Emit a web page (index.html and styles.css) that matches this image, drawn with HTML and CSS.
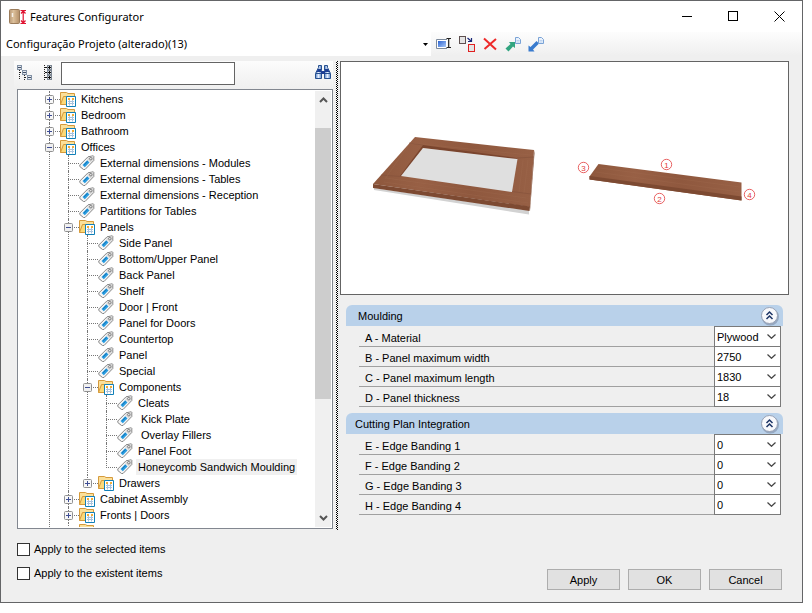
FILE: index.html
```html
<!DOCTYPE html>
<html lang="en">
<head>
<meta charset="utf-8">
<title>Features Configurator</title>
<link rel="stylesheet" href="styles.css">
</head>
<body>
<svg class="defs" aria-hidden="true">
  <defs>
    <linearGradient id="tan" x1="0" x2="1"><stop offset="0" stop-color="#b99a78"/><stop offset=".4" stop-color="#dcc09b"/><stop offset="1" stop-color="#b48f68"/></linearGradient>
    <linearGradient id="blue" x1="0" x2="1" y2="1"><stop offset="0" stop-color="#2a62d0"/><stop offset="1" stop-color="#a8c8f8"/></linearGradient>
    <linearGradient id="wood" x1="0" x2="1"><stop offset="0" stop-color="#8e583d"/><stop offset=".3" stop-color="#986045"/><stop offset=".6" stop-color="#8f583e"/><stop offset="1" stop-color="#976045"/></linearGradient>
    <linearGradient id="lens" x1="0" x2="1"><stop offset="0" stop-color="#5a86c8"/><stop offset=".5" stop-color="#e6f0ff"/><stop offset="1" stop-color="#5a86c8"/></linearGradient>
  </defs>
  <symbol id="folder" viewBox="0 0 16 16">
    <path d="M.5 13.500V1.500H6.500L8 2.500H14.500V6" fill="#fbe09a" stroke="#d59a3c"/>
    <path d="M.5 13.500L3.500 5.500H15V13.500Z" fill="#fcd978" stroke="#d59a3c"/>
    <path d="M6.500 5.500H15.500V15.500H6.500Z" fill="#fff" stroke="#1180b8"/>
    <path d="M8 10.500H14M8 12.500H14M9.500 9V14.500M12.500 9V14.500" stroke="#a9c3dd" fill="none"/>
    <path d="M8 8H10M12 8H14" stroke="#f2ad36" stroke-width="2"/>
  </symbol>
  <symbol id="tag" viewBox="0 0 16 16">
    <path d="M.8 10L9 1.800L14.300 .8L14.800 1.300V5.500L6 14.500H4.500L.8 11.500Z" fill="#f6f6f6" stroke="#858585"/>
    <path d="M9.500 2.500L14 1.200V5.200L11.500 7.500L8 4Z" fill="#d9d9d9"/>
    <path d="M3.500 10L8.200 5.200L10.500 7.500L5.800 12.200Z" fill="#269be0"/>
    <path d="M5 9.800L8.600 6.300" stroke="#1775b3"/>
    <circle cx="11.800" cy="3.700" r="1.200" fill="#fff" stroke="#777"/>
  </symbol>
  <symbol id="plus" viewBox="0 0 9 9">
    <rect x=".5" y=".5" width="8" height="8" rx="1" fill="#f7f7f7" stroke="#919191"/><path d="M2 4.500H7M4.500 2V7" stroke="#3e4d94"/>
  </symbol>
  <symbol id="minus" viewBox="0 0 9 9">
    <rect x=".5" y=".5" width="8" height="8" rx="1" fill="#f0f0f0" stroke="#919191"/><path d="M2 4.500H7" stroke="#3e4d94"/>
  </symbol>
  <symbol id="chev" viewBox="0 0 9 5"><path d="M.5 .5L4.500 4.300L8.500 .5" fill="none" stroke="#444" stroke-width="1.200"/></symbol>
  <symbol id="collapse" viewBox="0 0 20 20">
    <circle cx="10.300" cy="10.800" r="8.700" fill="#7886a0" opacity=".55"/>
    <circle cx="9.500" cy="9.500" r="8" fill="#f8f9fc" stroke="#98a2b5"/>
    <path d="M6.500 9L9.500 6L12.500 9M6.500 13L9.500 10L12.500 13" fill="none" stroke="#1d3566" stroke-width="1.500"/>
  </symbol>
  <symbol id="page" viewBox="0 0 6 7"><path d="M.5 .5H3.500L5.500 2.500V6.500H.5Z" fill="#eaf2fc" stroke="#7aa3d6"/><path d="M1.500 3.500H4.500M1.500 5H4.500" stroke="#9cbde6" stroke-width=".6"/></symbol>
</svg>

<div class="window">
  <header class="titlebar">
    <svg class="app-icon" viewBox="0 0 18 16"><rect x=".5" y=".5" width="10" height="14" rx="1" fill="url(#tan)" stroke="#9b7c5b"/><path d="M3.500 4V8" stroke="#f6f1ea" stroke-width="1.500"/><path d="M11.500 1.500H17M11.500 14.500H17M14.200 2V14M12 4.500L14.200 2L16.500 4.500M12 11.500L14.200 14L16.500 11.500" stroke="#e01230" stroke-width="1.200" fill="none"/></svg>
    <h1>Features Configurator</h1>
    <div class="caption-buttons">
      <button type="button" aria-label="Minimize"><svg viewBox="0 0 11 11"><path d="M0 5.500H10" stroke="#000"/></svg></button>
      <button type="button" aria-label="Maximize"><svg viewBox="0 0 11 11"><rect x=".5" y=".5" width="9" height="9" fill="none" stroke="#000"/></svg></button>
      <button type="button" aria-label="Close"><svg viewBox="0 0 11 11"><path d="M.5 .5L10.500 10.500M10.500 .5L.5 10.500" stroke="#000"/></svg></button>
    </div>
  </header>

  <div class="toolbar">
    <div class="project">
      <select aria-label="Project"><option>Configuração Projeto (alterado)(13)</option></select>
      <svg viewBox="0 0 5 3"><path d="M0 0H5L2.500 3Z"/></svg>
    </div>
    <div class="tools">
      <button type="button" aria-label="Rename"><svg viewBox="0 0 16 16"><path d="M11 3.500H.5V12.500H11" fill="#fff" stroke="#7c8a9c"/><path d="M2 5H10V11H2Z" fill="url(#blue)"/><path d="M10.500 2.500H15M10.500 11.500H15M12.700 3V11" stroke="#222" stroke-width="1.200"/></svg></button>
      <button type="button" aria-label="Duplicate"><svg viewBox="0 0 16 16"><rect x=".5" y=".5" width="6" height="7" fill="#e4e4e4" stroke="#5e5050"/><rect x="9.500" y="8.500" width="6" height="7" fill="#e4e4e4" stroke="#e02020"/><path d="M8.500 2L12 5M12.500 2V5.500H9" fill="none" stroke="#1a2878" stroke-width="1.200"/></svg></button>
      <button type="button" aria-label="Delete"><svg viewBox="0 0 16 16"><path d="M2 2.500L14 13.500M14 3L2.500 13" stroke="#ee2a2a" stroke-width="2"/></svg></button>
      <button type="button" aria-label="Export"><svg viewBox="0 0 16 16"><path d="M.5 12.500L5.500 8L4 6H10V12L8 10.500L3.500 15.500Z" fill="#32a580"/><use href="#page" x="10" y="1" width="6" height="7"/></svg></button>
      <button type="button" aria-label="Import"><svg viewBox="0 0 16 16"><path d="M.5 15.500V9.500L2.500 11L8.500 5L11 7.500L5 13.500L6.500 15.500Z" fill="#397bce"/><use href="#page" x="10" y="1" width="6" height="7"/></svg></button>
    </div>
  </div>

  <main class="content">
    <section class="browser">
      <div class="searchbar">
        <button type="button" aria-label="Collapse tree"><svg viewBox="0 0 16 16"><path d="M2.500 5V15M7.500 10V15M3 7.500H6M8 12.500H11" stroke="#222" stroke-dasharray="1 1" fill="none"/><g fill="#e4e9ef" stroke="#8291a5"><rect x=".5" y=".5" width="4" height="4"/><rect x="5.500" y="5.500" width="4" height="4"/><rect x="10.500" y="10.500" width="4" height="4"/></g><path d="M1 2.500H4M6 7.500H9M11 12.500H14" stroke="#435066"/></svg></button>
        <button type="button" aria-label="Expand tree"><svg viewBox="0 0 16 16"><path d="M4.500 0V15" stroke="#222" stroke-dasharray="1 1"/><g fill="#d5d9de" stroke="#7d8793"><rect x="7.500" y=".5" width="4" height="4"/><rect x="7.500" y="5.500" width="4" height="4"/><rect x="7.500" y="10.500" width="4" height="4"/></g><path d="M8 2.500H11M9.500 1V4M8 7.500H11M9.500 6V9M8 12.500H11M9.500 11V14M5 2.500H7M5 7.500H7M5 12.500H7" stroke="#111"/></svg></button>
        <input type="text" aria-label="Search">
        <button type="button" class="find" aria-label="Find"><svg viewBox="0 0 16 14"><g fill="url(#lens)" stroke="#27508f"><path d="M3.500 2.500V.5H6.500V5.500L6.500 13.500H.5V8.500Z"/><path d="M12.500 2.500V.5H9.500V5.500L9.500 13.500H15.500V8.500Z"/></g><path d="M6 6H10V9H6ZM1.500 7L3 4H6V7ZM14.500 7L13 4H10V7Z" fill="#1d3f94"/><path d="M1 8.500H6M10 8.500H15" stroke="#27508f"/></svg></button>
      </div>

      <div class="tree">
        <ul class="root">
          <li><div class="row"><button type="button" aria-label="Expand"><svg><use href="#plus"/></svg></button><svg class="ico"><use href="#folder"/></svg><span>Kitchens</span></div></li>
          <li><div class="row"><button type="button" aria-label="Expand"><svg><use href="#plus"/></svg></button><svg class="ico"><use href="#folder"/></svg><span>Bedroom</span></div></li>
          <li><div class="row"><button type="button" aria-label="Expand"><svg><use href="#plus"/></svg></button><svg class="ico"><use href="#folder"/></svg><span>Bathroom</span></div></li>
          <li><div class="row"><button type="button" aria-label="Collapse"><svg><use href="#minus"/></svg></button><svg class="ico"><use href="#folder"/></svg><span>Offices</span></div>
            <ul>
              <li><div class="row leaf"><svg class="ico"><use href="#tag"/></svg><span>External dimensions - Modules</span></div></li>
              <li><div class="row leaf"><svg class="ico"><use href="#tag"/></svg><span>External dimensions - Tables</span></div></li>
              <li><div class="row leaf"><svg class="ico"><use href="#tag"/></svg><span>External dimensions - Reception</span></div></li>
              <li><div class="row leaf"><svg class="ico"><use href="#tag"/></svg><span>Partitions for Tables</span></div></li>
              <li><div class="row"><button type="button" aria-label="Collapse"><svg><use href="#minus"/></svg></button><svg class="ico"><use href="#folder"/></svg><span>Panels</span></div>
                <ul>
                  <li><div class="row leaf"><svg class="ico"><use href="#tag"/></svg><span>Side Panel</span></div></li>
                  <li><div class="row leaf"><svg class="ico"><use href="#tag"/></svg><span>Bottom/Upper Panel</span></div></li>
                  <li><div class="row leaf"><svg class="ico"><use href="#tag"/></svg><span>Back Panel</span></div></li>
                  <li><div class="row leaf"><svg class="ico"><use href="#tag"/></svg><span>Shelf</span></div></li>
                  <li><div class="row leaf"><svg class="ico"><use href="#tag"/></svg><span>Door | Front</span></div></li>
                  <li><div class="row leaf"><svg class="ico"><use href="#tag"/></svg><span>Panel for Doors</span></div></li>
                  <li><div class="row leaf"><svg class="ico"><use href="#tag"/></svg><span>Countertop</span></div></li>
                  <li><div class="row leaf"><svg class="ico"><use href="#tag"/></svg><span>Panel</span></div></li>
                  <li><div class="row leaf"><svg class="ico"><use href="#tag"/></svg><span>Special</span></div></li>
                  <li><div class="row"><button type="button" aria-label="Collapse"><svg><use href="#minus"/></svg></button><svg class="ico"><use href="#folder"/></svg><span>Components</span></div>
                    <ul>
                      <li><div class="row leaf"><svg class="ico"><use href="#tag"/></svg><span>Cleats</span></div></li>
                      <li><div class="row leaf"><svg class="ico"><use href="#tag"/></svg><span>&nbsp;Kick Plate</span></div></li>
                      <li><div class="row leaf"><svg class="ico"><use href="#tag"/></svg><span>&nbsp;Overlay Fillers</span></div></li>
                      <li><div class="row leaf"><svg class="ico"><use href="#tag"/></svg><span>Panel Foot</span></div></li>
                      <li><div class="row leaf selected"><svg class="ico"><use href="#tag"/></svg><span>Honeycomb Sandwich Moulding</span></div></li>
                    </ul>
                  </li>
                  <li><div class="row"><button type="button" aria-label="Expand"><svg><use href="#plus"/></svg></button><svg class="ico"><use href="#folder"/></svg><span>Drawers</span></div></li>
                </ul>
              </li>
              <li><div class="row"><button type="button" aria-label="Expand"><svg><use href="#plus"/></svg></button><svg class="ico"><use href="#folder"/></svg><span>Cabinet Assembly</span></div></li>
              <li><div class="row"><button type="button" aria-label="Expand"><svg><use href="#plus"/></svg></button><svg class="ico"><use href="#folder"/></svg><span>Fronts | Doors</span></div></li>
              <li><div class="row"><button type="button" aria-label="Expand"><svg><use href="#plus"/></svg></button><svg class="ico"><use href="#folder"/></svg><span>F</span></div></li>
            </ul>
          </li>
        </ul>
        <div class="scrollbar">
          <svg viewBox="0 0 9 6"><path d="M1 5L4.500 1.500L8 5" fill="none" stroke="#555" stroke-width="2"/></svg>
          <div class="track"><div class="thumb"></div></div>
          <svg viewBox="0 0 9 6"><path d="M1 1L4.500 4.500L8 1" fill="none" stroke="#555" stroke-width="2"/></svg>
        </div>
      </div>
    </section>

    <div class="splitter"></div>

    <section class="details">
      <div class="preview">
        <svg viewBox="341 62 447 232" role="img" aria-label="Panel preview">
          <path d="M374 188L529 210.500V214.500L374 190Z" fill="#d2d2d2"/>
          <path d="M415 137L534 150L530 207L373 184Z" fill="url(#wood)"/>
          <path d="M373 184L530 206.500L529.500 211L373 188Z" fill="#7d4a32"/>
          <path d="M534 150L530 207V211L534.500 153Z" fill="#7d4a32"/>
          <path d="M423 145L517 158V160L423 148L402 176L400 176Z" fill="#7a452e"/>
          <path d="M423 148L517.500 159L512 192L401 176Z" fill="#dfdfdf"/>
          <path d="M381 175L401 176.500M512 191.500L531 194M423 145L409 143M517 158L534 157" stroke="#83503a" stroke-width=".6" fill="none"/>
          <path d="M410 143L530 155M408 146L385 179M386 178L526 198M384 182L528 203M523 160L519 192M528 160L524 193" stroke="#a56f53" stroke-width=".5" fill="none" opacity=".5"/>
          <path d="M598.500 164L741.500 182.500V200.500L589.500 179.500V176.500Z" fill="url(#wood)"/>
          <path d="M589.500 176L741.500 196.500V200.500L589.500 179.500Z" fill="#7d4a32"/>
          <path d="M600 168L740 187M596 172L740 192" stroke="#a56f53" stroke-width=".5" opacity=".5"/>
          <g fill="#fff" stroke="#e23c3c" stroke-width=".8"><circle cx="666.500" cy="164.500" r="5.200"/><circle cx="659.500" cy="198.500" r="5.200"/><circle cx="583.500" cy="167.500" r="5.200"/><circle cx="749.500" cy="194.500" r="5.200"/></g>
          <g class="marks"><text x="666.500" y="167.500">1</text><text x="659.500" y="201.500">2</text><text x="583.500" y="170.500">3</text><text x="749.500" y="197.500">4</text></g>
        </svg>
      </div>

      <div class="group">
        <div class="group-head"><h2>&nbsp;Moulding</h2><button type="button" aria-label="Collapse Moulding"><svg><use href="#collapse"/></svg></button></div>
        <div class="fields">
          <div class="field"><label for="a">A - Material</label><div class="combo"><select id="a"><option>Plywood</option></select><svg><use href="#chev"/></svg></div></div>
          <div class="field"><label for="b">B - Panel maximum width</label><div class="combo"><select id="b"><option>2750</option></select><svg><use href="#chev"/></svg></div></div>
          <div class="field"><label for="c">C - Panel maximum length</label><div class="combo"><select id="c"><option>1830</option></select><svg><use href="#chev"/></svg></div></div>
          <div class="field"><label for="d">D - Panel thickness</label><div class="combo"><select id="d"><option>18</option></select><svg><use href="#chev"/></svg></div></div>
        </div>
      </div>
      <div class="group">
        <div class="group-head"><h2>Cutting Plan Integration</h2><button type="button" aria-label="Collapse Cutting Plan Integration"><svg><use href="#collapse"/></svg></button></div>
        <div class="fields">
          <div class="field"><label for="e">E - Edge Banding 1</label><div class="combo"><select id="e"><option>0</option></select><svg><use href="#chev"/></svg></div></div>
          <div class="field"><label for="f">F - Edge Banding 2</label><div class="combo"><select id="f"><option>0</option></select><svg><use href="#chev"/></svg></div></div>
          <div class="field"><label for="g">G - Edge Banding 3</label><div class="combo"><select id="g"><option>0</option></select><svg><use href="#chev"/></svg></div></div>
          <div class="field"><label for="h">H - Edge Banding 4</label><div class="combo"><select id="h"><option>0</option></select><svg><use href="#chev"/></svg></div></div>
        </div>
      </div>
    </section>
  </main>

  <footer class="footer">
    <div class="options">
      <label><input type="checkbox">Apply to the selected items</label>
      <label><input type="checkbox">Apply to the existent items</label>
    </div>
    <div class="actions">
      <button type="button">Apply</button>
      <button type="button">OK</button>
      <button type="button">Cancel</button>
    </div>
  </footer>
</div>
</body>
</html>
```

FILE: styles.css
```css
* { box-sizing: border-box; }

body {
  margin: 0;
  padding: 0 9px 10px 0;
  height: 100vh;
  background: #fff;
  color: #000;
  font: 11px/16px "Liberation Sans", Arial, sans-serif;
}

button, input, select { font: inherit; color: inherit; }
button { padding: 0; border: 0; background: none; }
svg { display: block; }
.defs { position: absolute; width: 0; height: 0; }

.window {
  display: flex;
  flex-direction: column;
  height: 100%;
  border: 1px solid #646567;
  background: #efefef;
}

.titlebar {
  display: flex;
  align-items: center;
  height: 31px;
  padding-left: 8px;
  background: #fff;
}
.app-icon { width: 18px; height: 16px; }
.titlebar h1 { flex: 1; margin: 0 0 0 3px; font: 11px/16px "Noto Sans", sans-serif; }
.caption-buttons { display: flex; }
.caption-buttons button { display: grid; place-items: center; width: 46px; height: 28px; }
.caption-buttons svg { width: 11px; height: 11px; }

.toolbar {
  display: flex;
  height: 24px;
  background: linear-gradient(#fdfdfd, #efefef);
}
.project { display: grid; align-items: center; width: 430px; background: #fff; }
.project > * { grid-area: 1 / 1; }
.project select {
  width: 100%;
  height: 24px;
  padding: 0 5px;
  border: 0;
  background: none;
  appearance: none;
  font: 11px/16px "Noto Sans", sans-serif;
}
.project svg { justify-self: end; width: 5px; height: 3px; margin-right: 3px; pointer-events: none; }
.tools { display: flex; align-items: center; gap: 7px; padding-left: 5px; }
.tools svg { width: 16px; height: 16px; }

.content {
  display: grid;
  grid-template-columns: 319px 2px minmax(0, 1fr);
  flex: 1;
  min-height: 0;
  padding: 5px 13px 0 13px;
}

.browser { display: flex; flex-direction: column; min-height: 0; padding-bottom: 1px; }
.searchbar {
  display: flex;
  align-items: flex-start;
  gap: 7px;
  height: 28px;
  padding: 1px 2px 0 3px;
  background: linear-gradient(#fcfcfc, #efefef);
}
.searchbar button { margin-top: 3px; }
.searchbar svg { width: 16px; height: 16px; }
.searchbar input {
  width: 174px;
  height: 23px;
  margin-left: -2px;
  padding: 0 4px;
  border: 1px solid #646464;
  background: #fff;
}
.searchbar .find { margin-left: auto; }
.find svg { height: 14px; }

.tree {
  display: flex;
  flex: 1;
  min-height: 0;
  margin: 0 0 0 3px;
  padding: 1px 1px 1px 22px;
  border: 1px solid #828790;
  background: #fff;
}
.tree ul { margin: 0; padding: 0 0 0 19px; list-style: none; }
.tree .root { flex: 1; min-width: 0; padding: 0; overflow: hidden; }
.tree li { position: relative; }
.tree li::before {
  content: "";
  position: absolute;
  left: 9px;
  top: 0;
  bottom: 0;
  border-left: 1px dotted #777;
}
.tree ul ul > li:last-child::before { bottom: auto; height: 9px; }
.row { display: flex; align-items: center; height: 16px; }
.row::before {
  content: "";
  position: absolute;
  left: 9px;
  top: 8px;
  width: 11px;
  border-top: 1px dotted #777;
}
.row button { position: relative; width: 9px; margin: 0 6px 0 5px; }
.row button svg { width: 9px; height: 9px; }
.ico { width: 16px; height: 16px; }
.leaf { padding-left: 20px; }
.row span { margin-left: 3px; padding: 0 2px; line-height: 16px; white-space: nowrap; }
.selected span { background: #f0f0f0; }

.scrollbar {
  display: flex;
  flex-direction: column;
  align-items: center;
  width: 16px;
  padding: 6px 0;
  background: #f0f0f0;
}
.scrollbar svg { width: 9px; height: 6px; }
.track { flex: 1; align-self: stretch; padding: 25px 0 0; }
.thumb { height: 70%; background: #cdcdcd; }

.splitter {
  margin-left: 3px;
  width: 2px;
  background: repeating-conic-gradient(#000 0 25%, #fff 0 50%) 0 0 / 2px 2px;
}

.details { display: flex; flex-direction: column; gap: 6px; padding-left: 5px; }
.preview { margin-bottom: 4px; border: 1px solid #646464; background: #fff; }
.preview svg { width: 100%; }
.marks { fill: #e23c3c; font: 8px "Liberation Sans", sans-serif; text-anchor: middle; }

.group { padding: 0 6px; }
.group-head {
  display: flex;
  align-items: center;
  justify-content: space-between;
  height: 21px;
  margin-bottom: 1px;
  padding: 0 3px 0 9px;
  border-radius: 6px 6px 0 0;
  background: #b9d1ea;
}
.group-head h2 { margin: 0; font: inherit; }
.group-head svg { width: 20px; height: 20px; }
.fields { padding: 0 2px 0 13px; }
.field { display: flex; height: 20px; }
.field label { flex: 1; padding: 3px 6px 0; border-bottom: 1px solid #a0a0a0; }
.combo {
  display: grid;
  align-items: center;
  width: 67px;
  height: 21px;
  margin-top: -1px;
  border: 1px solid #7a7a7a;
  background: #fff;
}
.combo > * { grid-area: 1 / 1; }
.combo select { width: 100%; height: 19px; padding: 0 2px; border: 0; background: none; appearance: none; }
.combo svg { justify-self: end; width: 9px; height: 5px; margin-right: 4px; pointer-events: none; }

.footer {
  display: flex;
  align-items: flex-end;
  justify-content: space-between;
  padding: 11px 20px 12px 16px;
}
.options { display: flex; flex-direction: column; gap: 8px; padding-bottom: 9px; }
.options label { display: flex; align-items: center; gap: 4px; }
.options input {
  width: 13px;
  height: 13px;
  margin: 0;
  border: 1px solid #333;
  background: #fff;
  appearance: none;
}
.actions { display: flex; gap: 8px; }
.actions button { width: 73px; height: 21px; border: 1px solid #adadad; background: #e1e1e1; }
```
